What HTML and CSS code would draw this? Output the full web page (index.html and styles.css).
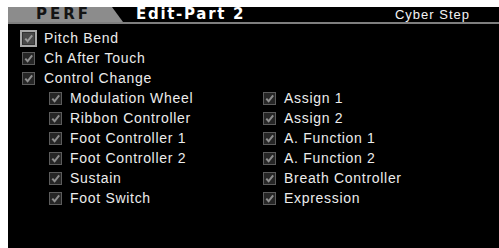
FILE: index.html
```html
<!DOCTYPE html>
<html>
<head>
<meta charset="utf-8">
<link rel="stylesheet" href="styles.css">
</head>
<body>
<div class="screen">
  <div class="header">
    <div class="tab">PERF</div>
    <div class="title">Edit-Part 2</div>
    <div class="name">Cyber Step</div>
  </div>
  <div class="content">
    <div class="row top"><span class="cb focus"><svg viewBox="0 0 12 12"><path d="M2.5 6.2 L5 9 L10 2.5" /></svg></span><span class="lbl">Pitch Bend</span></div>
    <div class="row top"><span class="cb"><svg viewBox="0 0 12 12"><path d="M2.5 6.2 L5 9 L10 2.5" /></svg></span><span class="lbl">Ch After Touch</span></div>
    <div class="row top"><span class="cb"><svg viewBox="0 0 12 12"><path d="M2.5 6.2 L5 9 L10 2.5" /></svg></span><span class="lbl">Control Change</span></div>
    <div class="grid">
      <div class="col">
        <div class="row"><span class="cb"><svg viewBox="0 0 12 12"><path d="M2.5 6.2 L5 9 L10 2.5" /></svg></span><span class="lbl">Modulation Wheel</span></div>
        <div class="row"><span class="cb"><svg viewBox="0 0 12 12"><path d="M2.5 6.2 L5 9 L10 2.5" /></svg></span><span class="lbl">Ribbon Controller</span></div>
        <div class="row"><span class="cb"><svg viewBox="0 0 12 12"><path d="M2.5 6.2 L5 9 L10 2.5" /></svg></span><span class="lbl">Foot Controller 1</span></div>
        <div class="row"><span class="cb"><svg viewBox="0 0 12 12"><path d="M2.5 6.2 L5 9 L10 2.5" /></svg></span><span class="lbl">Foot Controller 2</span></div>
        <div class="row"><span class="cb"><svg viewBox="0 0 12 12"><path d="M2.5 6.2 L5 9 L10 2.5" /></svg></span><span class="lbl">Sustain</span></div>
        <div class="row"><span class="cb"><svg viewBox="0 0 12 12"><path d="M2.5 6.2 L5 9 L10 2.5" /></svg></span><span class="lbl">Foot Switch</span></div>
      </div>
      <div class="col">
        <div class="row"><span class="cb"><svg viewBox="0 0 12 12"><path d="M2.5 6.2 L5 9 L10 2.5" /></svg></span><span class="lbl">Assign 1</span></div>
        <div class="row"><span class="cb"><svg viewBox="0 0 12 12"><path d="M2.5 6.2 L5 9 L10 2.5" /></svg></span><span class="lbl">Assign 2</span></div>
        <div class="row"><span class="cb"><svg viewBox="0 0 12 12"><path d="M2.5 6.2 L5 9 L10 2.5" /></svg></span><span class="lbl">A. Function 1</span></div>
        <div class="row"><span class="cb"><svg viewBox="0 0 12 12"><path d="M2.5 6.2 L5 9 L10 2.5" /></svg></span><span class="lbl">A. Function 2</span></div>
        <div class="row"><span class="cb"><svg viewBox="0 0 12 12"><path d="M2.5 6.2 L5 9 L10 2.5" /></svg></span><span class="lbl">Breath Controller</span></div>
        <div class="row"><span class="cb"><svg viewBox="0 0 12 12"><path d="M2.5 6.2 L5 9 L10 2.5" /></svg></span><span class="lbl">Expression</span></div>
      </div>
    </div>
  </div>
</div>
</body>
</html>
```

FILE: styles.css
```css
html, body {
  margin: 0;
  padding: 0;
  background: #ffffff;
}
body {
  width: 499px;
  height: 248px;
  overflow: hidden;
}
.screen {
  margin: 7px 0 0 8px;
  width: 491px;
  height: 241px;
  background: #000;
  color: #ececec;
  font-family: "Liberation Sans", Arial, sans-serif;
  font-size: 14px;
  letter-spacing: 0.7px;
}
.header {
  display: flex;
  align-items: stretch;
  height: 15px;
  border-bottom: 2px solid #7e7e7e;
}
.tab {
  width: 115px;
  box-sizing: border-box;
  padding-left: 28px;
  background: #8c8c8c;
  color: #141414;
  font-family: "DejaVu Sans", sans-serif;
  font-weight: bold;
  font-size: 15px;
  line-height: 15px;
  letter-spacing: 3px;
  clip-path: polygon(0 0, calc(100% - 11px) 0, 100% 100%, 0 100%);
}
.title {
  margin-left: 13px;
  color: #fff;
  font-family: "DejaVu Sans", sans-serif;
  font-weight: bold;
  font-size: 15px;
  line-height: 15px;
  letter-spacing: 1.7px;
}
.name {
  margin-left: auto;
  padding-right: 29px;
  color: #f4f4f4;
  font-size: 13px;
  line-height: 15px;
  letter-spacing: 1px;
}
.content {
  padding-top: 4px;
}
.row {
  display: flex;
  align-items: center;
  height: 20px;
  gap: 8px;
}
.row.top {
  padding-left: 14px;
  gap: 9px;
}
.grid {
  display: grid;
  grid-template-columns: 214px 1fr;
  padding-left: 41px;
}
.cb {
  display: inline-block;
  width: 13px;
  height: 13px;
  box-sizing: border-box;
  border: 1px solid #5c5c5c;
  background: #262626;
  flex: none;
}
.cb svg {
  display: block;
  width: 11px;
  height: 11px;
}
.cb path {
  fill: none;
  stroke: #8e8e8e;
  stroke-width: 2.2;
}
.cb.focus {
  outline: 2px solid #a8a8a8;
  outline-offset: 0;
  background: #4a4a4a;
  border-color: #333;
}
.cb.focus path {
  stroke: #9a9a9a;
}
.lbl {
  line-height: 20px;
  white-space: nowrap;
}
```
